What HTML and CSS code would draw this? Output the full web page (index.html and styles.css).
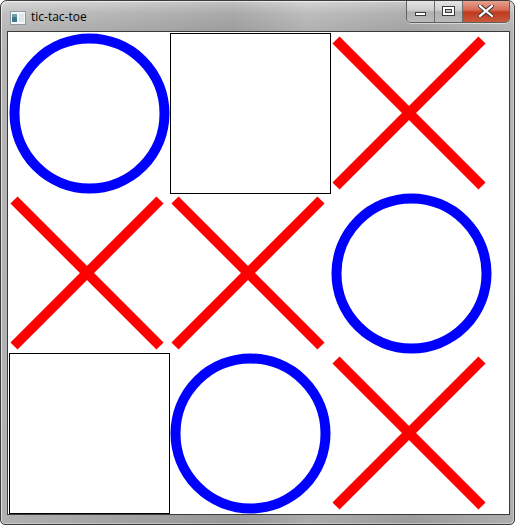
FILE: index.html
```html
<!DOCTYPE html>
<html>
<head>
<meta charset="utf-8">
<title>tic-tac-toe</title>
<link rel="stylesheet" href="styles.css">
</head>
<body>
<div class="window">
  <div class="titlebar">
    <svg class="app-icon" width="16" height="14" viewBox="0 0 16 14">
      <rect x="0.5" y="0.5" width="15" height="13" fill="#f4f6f8" stroke="#8c9aa6"/>
      <rect x="2" y="3" width="5" height="8" fill="#3f7a8c"/>
      <rect x="2" y="3" width="5" height="3" fill="#6fa0a8"/>
      <rect x="9" y="3" width="5" height="8" fill="#dfe6ea"/>
    </svg>
    <span class="title">tic-tac-toe</span>
    <div class="caption-buttons">
      <div class="cbtn cbtn-min"><span class="min-glyph"></span></div>
      <div class="cbtn cbtn-max"><span class="max-glyph"></span></div>
      <div class="cbtn cbtn-close">
        <svg width="16" height="12" viewBox="0 0 16 12">
          <path d="M2 1 L14 11 M14 1 L2 11" stroke="#3a3a3a" stroke-width="4.2" stroke-linecap="square"/>
          <path d="M2 1 L14 11 M14 1 L2 11" stroke="#ffffff" stroke-width="2.2" stroke-linecap="square"/>
        </svg>
      </div>
    </div>
  </div>
  <div class="client">
    <div class="board">
      <div class="cell"><svg class="mark" viewBox="0 0 161 161"><circle cx="80.5" cy="80.5" r="75" fill="none" stroke="#0000ff" stroke-width="10"/></svg></div>
      <div class="cell empty"></div>
      <div class="cell"><svg class="mark" viewBox="0 0 161 161"><path d="M5 7 L151 153 M151 7 L5 153" stroke="#ff0000" stroke-width="10"/></svg></div>

      <div class="cell"><svg class="mark" viewBox="0 0 161 161"><path d="M5 7 L151 153 M151 7 L5 153" stroke="#ff0000" stroke-width="10"/></svg></div>
      <div class="cell"><svg class="mark" viewBox="0 0 161 161"><path d="M5 7 L151 153 M151 7 L5 153" stroke="#ff0000" stroke-width="10"/></svg></div>
      <div class="cell"><svg class="mark" viewBox="0 0 161 161"><circle cx="80.5" cy="80.5" r="75" fill="none" stroke="#0000ff" stroke-width="10"/></svg></div>

      <div class="cell empty"></div>
      <div class="cell"><svg class="mark" viewBox="0 0 161 161"><circle cx="80.5" cy="80.5" r="75" fill="none" stroke="#0000ff" stroke-width="10"/></svg></div>
      <div class="cell"><svg class="mark" viewBox="0 0 161 161"><path d="M5 7 L151 153 M151 7 L5 153" stroke="#ff0000" stroke-width="10"/></svg></div>
    </div>
  </div>
</div>
</body>
</html>
```
FILE: styles.css
```css
html, body {
  margin: 0;
  padding: 0;
  background: #ffffff;
}

.window {
  box-sizing: border-box;
  width: 515px;
  height: 525px;
  border: 1px solid #3b3b3b;
  border-radius: 7px 7px 5px 5px;
  padding: 0 4px 9px 6px;
  display: flex;
  flex-direction: column;
  background:
    linear-gradient(90deg, rgba(255,255,255,0.14) 0%, rgba(255,255,255,0) 20%, rgba(0,0,0,0.08) 45%, rgba(255,255,255,0.08) 60%, rgba(0,0,0,0.05) 80%, rgba(255,255,255,0.10) 100%),
    linear-gradient(180deg, #d2d2d2 0px, #b8b8b8 12px, #aaaaaa 30px, #a4a4a4 100%);
  box-shadow: inset 1px 1px 0 rgba(255,255,255,0.6), inset -1px -1px 0 rgba(255,255,255,0.35);
  overflow: hidden;
}

.titlebar {
  height: 30px;
  margin: 0 -4px 0 -6px;
  display: flex;
  align-items: flex-start;
  font-family: "Open Sans", "Noto Sans", "DejaVu Sans", sans-serif;
}

.app-icon {
  margin: 10px 0 0 9px;
  flex: none;
}

.title {
  margin: 7px 0 0 5px;
  font-size: 12px;
  line-height: 18px;
  color: #000000;
}

.caption-buttons {
  margin-left: auto;
  margin-right: 4px;
  margin-top: -1px;
  display: flex;
  height: 22px;
  border: 1px solid #5f6060;
  border-top: none;
  border-radius: 0 0 5px 5px;
  overflow: hidden;
  box-shadow: 0 1px 0 rgba(255,255,255,0.5);
}

.cbtn {
  height: 22px;
  display: flex;
  align-items: center;
  justify-content: center;
}

.cbtn-min, .cbtn-max {
  width: 27px;
  background: linear-gradient(180deg, #e6e6e6 0%, #cfcfcf 45%, #b0b0b0 55%, #bbbbbb 100%);
  border-right: 1px solid #6d6d6d;
}

.cbtn-close {
  width: 46px;
  background: linear-gradient(180deg, #e8a896 0%, #d66c55 45%, #c13a1e 55%, #c85a3e 100%);
}

.min-glyph {
  display: block;
  width: 9px;
  height: 2px;
  margin-top: 6px;
  background: #ffffff;
  border: 1px solid #3c3c3c;
}

.max-glyph {
  display: block;
  width: 7px;
  height: 4px;
  border: 2px solid #ffffff;
  outline: 1px solid #3c3c3c;
  box-shadow: inset 0 0 0 1px #3c3c3c;
  margin-top: -1px;
}

.client {
  flex: 1;
  border: 1px solid #3a3a3a;
  background: #ffffff;
  overflow: hidden;
}

.board {
  display: grid;
  grid-template-columns: repeat(3, 161px);
  grid-template-rows: repeat(3, 160px);
  padding: 1px 0 0 1px;
}

.cell {
  box-sizing: border-box;
  width: 161px;
  height: 161px;
}

.cell.empty {
  border: 1px solid #000000;
}

.mark {
  display: block;
  width: 161px;
  height: 161px;
}
```
